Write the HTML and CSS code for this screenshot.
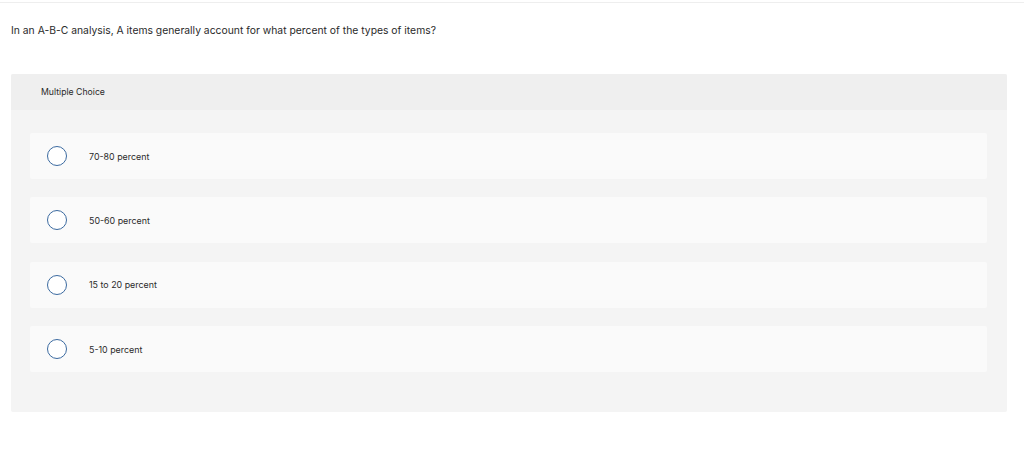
FILE: index.html
```html
<!DOCTYPE html>
<html>
<head>
<meta charset="utf-8">
<link rel="stylesheet" href="styles.css">
</head>
<body>
<div class="topline"></div>
<p class="question">In an A-B-C analysis, A items generally account for what percent of the types of items?</p>
<div class="panel">
  <div class="panel-head">Multiple Choice</div>
  <div class="panel-body">
    <div class="option"><span class="radio"></span><span class="label">70-80 percent</span></div>
    <div class="option"><span class="radio"></span><span class="label">50-60 percent</span></div>
    <div class="option"><span class="radio"></span><span class="label">15 to 20 percent</span></div>
    <div class="option"><span class="radio"></span><span class="label">5-10 percent</span></div>
  </div>
</div>
</body>
</html>
```
FILE: styles.css
```css
html, body {
  margin: 0;
  padding: 0;
  background: #ffffff;
}
body {
  font-family: Inter, Lato, "Liberation Sans", sans-serif;
  color: #2a2a2a;
  width: 1024px;
  height: 458px;
  overflow: hidden;
}
.topline {
  height: 1px;
  margin-top: 2px;
  background: #eeeeee;
}
.question {
  margin: 19px 0 0 11px;
  font-size: 10.35px;
  line-height: 16px;
  color: #2a2a2a;
}
.panel {
  margin: 36px 0 0 11px;
  width: 996px;
  background: #f4f4f4;
  border-radius: 2px;
}
.panel-head {
  height: 36px;
  background: #efefef;
  display: flex;
  align-items: center;
  padding-left: 30px;
  font-size: 8.7px;
  color: #2a2a2a;
  border-radius: 2px 2px 0 0;
}
.panel-body {
  padding: 23px 20px 40px 19px;
  display: flex;
  flex-direction: column;
  gap: 18.4px;
}
.option {
  height: 46px;
  background: #fafafa;
  border-radius: 2px;
  display: flex;
  align-items: center;
  padding-left: 17px;
}
.radio {
  width: 18px;
  height: 18px;
  border: 1px solid #3b6aa0;
  border-radius: 50%;
  background: #fff;
  flex: none;
}
.label {
  margin-left: 22px;
  font-size: 8.9px;
  color: #2a2a2a;
}
```
